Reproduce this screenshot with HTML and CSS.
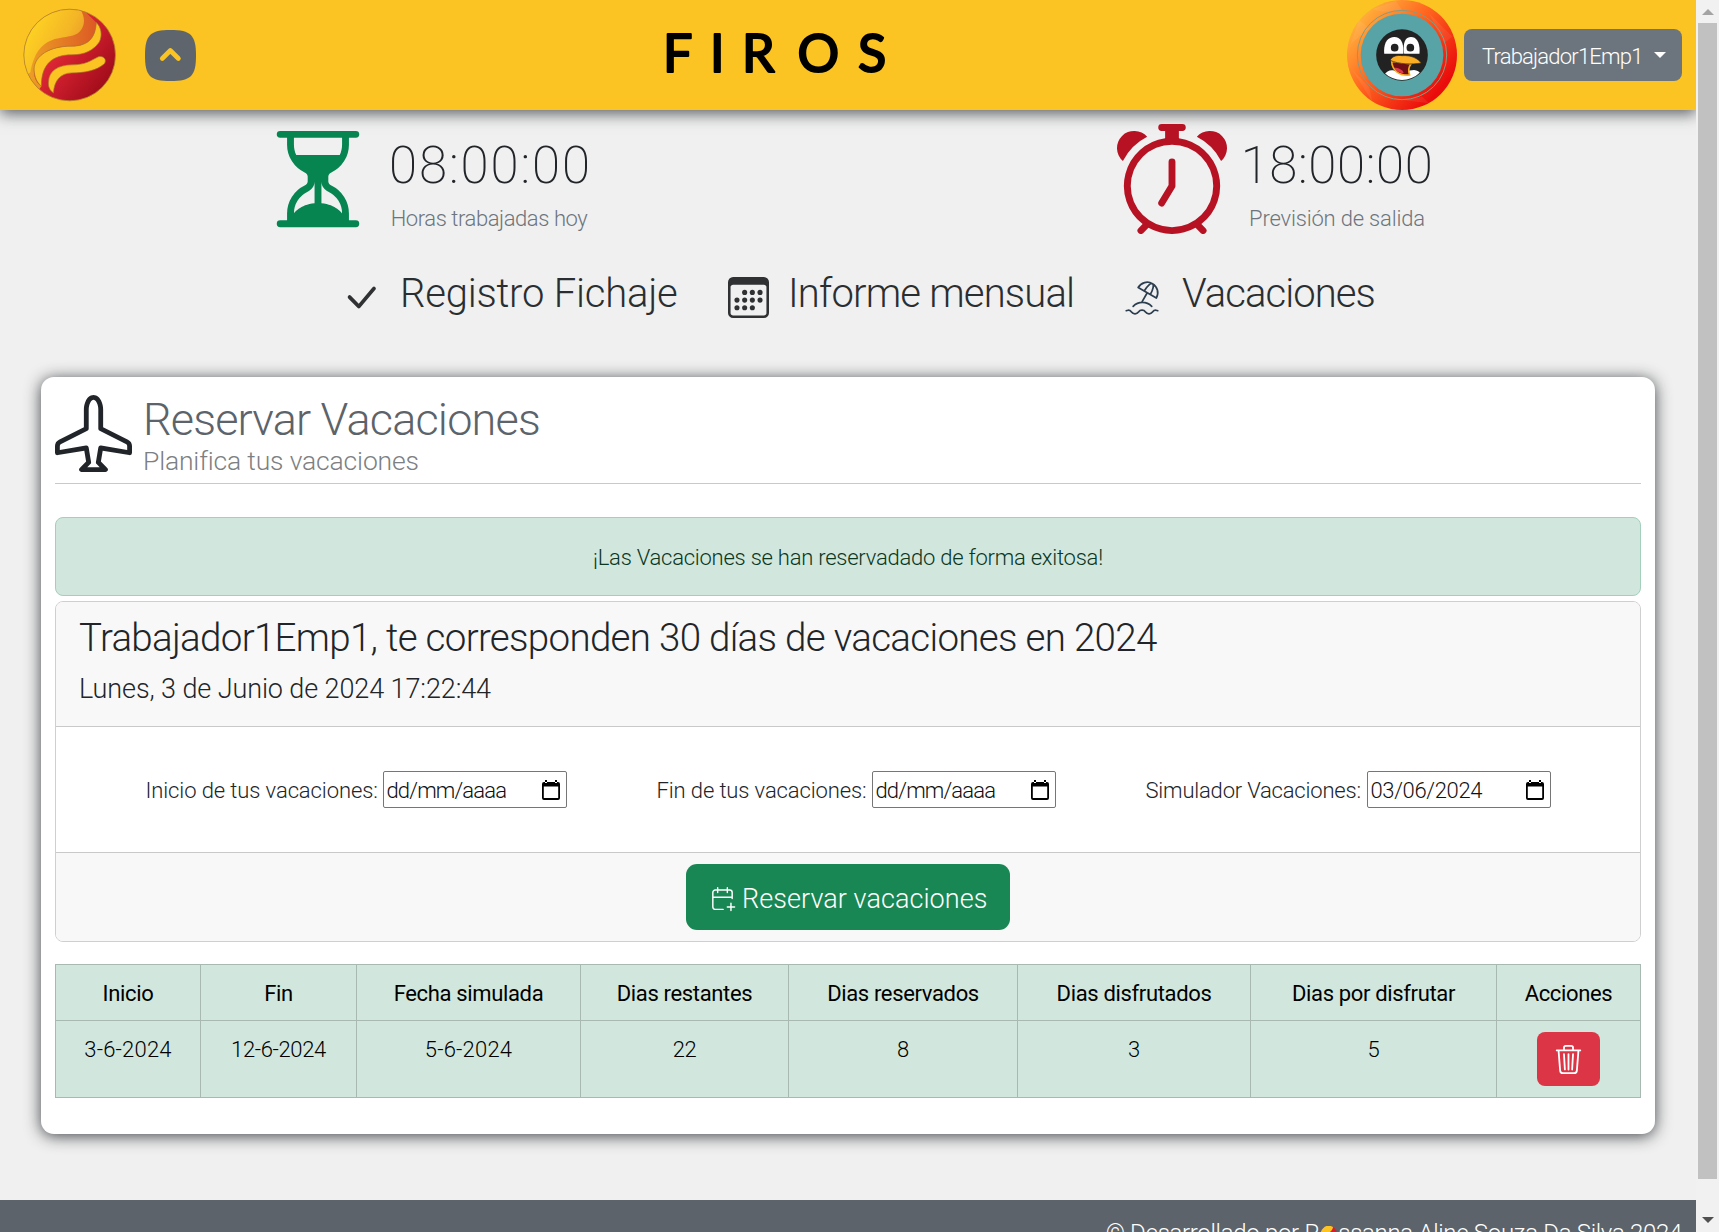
FILE: index.html
```html
<!DOCTYPE html>
<html lang="es">
<head>
<meta charset="utf-8">
<title>Firos - Vacaciones</title>
<link rel="stylesheet" href="styles.css">
</head>
<body>
<div class="page">
  <header class="topbar">
    <svg class="logo" viewBox="70 23 278 281">
      <defs>
        <linearGradient id="red" x1="0.1" y1="0.3" x2="0.9" y2="0.9"><stop offset="0" stop-color="#f03a40"/><stop offset=".45" stop-color="#d2202f"/><stop offset="1" stop-color="#9c0a18"/></linearGradient>
        <linearGradient id="org" x1="0" y1="0.4" x2="1" y2="0.4"><stop offset="0" stop-color="#efa724"/><stop offset="1" stop-color="#dc5a24"/></linearGradient>
        <linearGradient id="yel" x1="0.2" y1="0.2" x2="1" y2="0.7"><stop offset="0" stop-color="#fed322"/><stop offset=".6" stop-color="#f4b526"/><stop offset="1" stop-color="#e68f2a"/></linearGradient>
        <clipPath id="ball"><circle cx="209.500" cy="163.500" r="137"/></clipPath>
      </defs>
      <g clip-path="url(#ball)">
        <circle cx="209.500" cy="163.500" r="138" fill="url(#red)"/>
        <path d="M289 66C287 105 272 137 215 137C150 137 105 165 103 212C103 235 114 250 125 257L112 275L60 280V0H240L262 40Z" fill="url(#org)"/>
        <path d="M242 28C256 50 256 75 240 93C222 111 197 106 165 116C125 130 104 155 92 215L60 240V10Z" fill="url(#yel)"/>
        <path d="M289 66C287 105 272 137 215 137C150 137 105 165 103 205C103 230 114 248 125 257C124 190 160 163 215 163C255 163 280 150 298 125C308 105 304 80 289 66Z" fill="#fbc423" stroke="#a5762a" stroke-width="2"/>
        <path d="M161 277C149 268 145 258 146 245C147 210 175 194 215 193C258 193 272 180 295 169C311 164 322 178 313 190C290 210 255 217 215 217C182 218 163 240 161 277Z" fill="#fbc423" stroke="#a5762a" stroke-width="2"/>
      </g>
      <circle cx="209.500" cy="163.500" r="137" fill="none" stroke="#b5862b" stroke-width="2.500"/>
    </svg>
    <svg class="toggle" viewBox="435.500 90 152 152">
      <path d="M435.500 166C435.500 105 451 90 511.500 90S587.500 105 587.500 166 573 242 511.500 242 435.500 227 435.500 166Z" fill="#5e656c"/>
      <path d="M487 175L511 151L535 175" fill="none" stroke="#fbc423" stroke-width="14" stroke-linecap="round" stroke-linejoin="round"/>
    </svg>
    <svg class="brand" width="236" height="110"><text y="72" x="3 50 82 137.500 198">FIROS</text></svg>
    <svg class="avatar" viewBox="84 0 330 330">
      <defs>
        <linearGradient id="ring" x1="0.1" y1="0.15" x2="0.85" y2="0.8"><stop offset="0" stop-color="#ffb33c"/><stop offset=".45" stop-color="#ff651f"/><stop offset="1" stop-color="#ea0c0c"/></linearGradient>
        <clipPath id="face"><circle cx="249" cy="165" r="75"/></clipPath>
        <clipPath id="eyes"><rect x="180" y="100" width="140" height="61"/></clipPath>
      </defs>
      <circle cx="249" cy="165" r="165" fill="url(#ring)"/>
      <path d="M84 165L120 60L150 85L98 130ZM160 28L230 2L250 32L190 35ZM330 40L400 110L375 130ZM100 210L160 305L150 260ZM250 300L330 310L310 290Z" fill="#fff" opacity=".07"/>
      <circle cx="249" cy="165" r="134" fill="none" stroke="#8a9a80" stroke-width="3"/>
      <circle cx="249" cy="165" r="124" fill="#57a3a5"/>
      <circle cx="249" cy="165" r="77.500" fill="#222"/>
      <g clip-path="url(#eyes)" fill="#fff"><path d="M196 165C192 130 205 111 226 111S255 130 253 165Z"/><path d="M256 165C250 130 258 111 276 111S305 130 301 165Z"/></g>
      <circle cx="227" cy="143" r="11.500" fill="#222"/><circle cx="274" cy="143" r="11.500" fill="#222"/>
      <path clip-path="url(#face)" d="M195 225C205 210 220 206 235 216L285 210C295 211 302 215 305 222L290 250H205Z" fill="#fff"/>
      <path d="M218 184C219 210 240 228 272 225C267 212 268 202 276 192Z" fill="#6d0f14" stroke="#f5a91f" stroke-width="5" stroke-linejoin="round"/>
      <path d="M226 203C238 203 252 209 254 219C240 219 231 212 226 203Z" fill="#e23a4d"/>
      <path d="M213 181C220 168 235 165 249 167C275 165 297 175 307 189C280 194 240 193 213 181Z" fill="#fbae24" stroke="#222" stroke-width="2"/>
    </svg>
    <button class="user">Trabajador1Emp1<span class="caret"></span></button>
  </header>

  <section class="stats">
    <div class="stat">
      <svg class="stat-icon green" viewBox="0 0 16 16"><path d="M2.500 15a.5.5 0 1 1 0-1h1v-1a4.500 4.500 0 0 1 2.557-4.060c.29-.139.443-.377.443-.59v-.7c0-.213-.154-.451-.443-.59A4.500 4.500 0 0 1 3.500 3V2h-1a.5.5 0 0 1 0-1h11a.5.5 0 0 1 0 1h-1v1a4.500 4.500 0 0 1-2.557 4.060c-.29.139-.443.377-.443.59v.7c0 .213.154.451.443.59A4.500 4.500 0 0 1 12.500 13v1h1a.5.5 0 0 1 0 1zm2-13v1c0 .537.120 1.045.337 1.500h6.326c.216-.455.337-.963.337-1.500V2zm3 6.350c0 .701-.478 1.236-1.011 1.492A3.500 3.500 0 0 0 4.500 13s.866-1.299 3-1.480zm1 0v3.170c2.134.181 3 1.480 3 1.480a3.500 3.500 0 0 0-1.989-3.158C8.978 9.586 8.500 9.052 8.500 8.351z"/></svg>
      <div class="stat-text"><div class="clock clock-in">08:00:00</div><div class="stat-label label-in">Horas trabajadas hoy</div></div>
    </div>
    <div class="stat stat-out">
      <svg class="stat-icon red" viewBox="0 0 16 16"><path d="M6 .5a.5.5 0 0 1 .5-.5h3a.5.5 0 0 1 0 1H9v1.070a7.001 7.001 0 0 1 3.274 12.474l.601.602a.5.5 0 0 1-.707.708l-.746-.746A6.970 6.970 0 0 1 8 16a6.970 6.970 0 0 1-3.422-.892l-.746.746a.5.5 0 0 1-.707-.708l.602-.602A7.001 7.001 0 0 1 7 2.070V1h-.5A.5.5 0 0 1 6 .5zM8 3a6 6 0 1 0 .001 12A6 6 0 0 0 8 3zm.5 2.500a.5.5 0 0 0-1 0v3.362l-1.429 2.380a.5.5 0 1 0 .858.515l1.500-2.500A.5.5 0 0 0 8.500 9zM.860 5.387A2.500 2.500 0 1 1 4.387 1.860 8.035 8.035 0 0 0 .860 5.387M11.613 1.860a2.500 2.500 0 1 1 3.527 3.527 8.035 8.035 0 0 0-3.527-3.527"/></svg>
      <div class="stat-text"><div class="clock clock-out">18:00:00</div><div class="stat-label label-out">Previsión de salida</div></div>
    </div>
  </section>

  <nav class="menu">
    <a class="link"><svg width="41" height="41" viewBox="0 0 16 16" fill="#2f3133"><path d="M12.736 3.970a.733.733 0 0 1 1.047 0c.286.289.290.756.010 1.050L7.880 12.010a.733.733 0 0 1-1.065.020L3.217 8.384a.757.757 0 0 1 0-1.060.733.733 0 0 1 1.047 0l3.052 3.093 5.400-6.425z"/></svg><span class="t-reg">Registro Fichaje</span></a>
    <a class="link"><svg width="41" height="41" viewBox="0 0 16 16" fill="#2f3133"><path d="M14 0H2a2 2 0 0 0-2 2v12a2 2 0 0 0 2 2h12a2 2 0 0 0 2-2V2a2 2 0 0 0-2-2M1 3.857C1 3.384 1.448 3 2 3h12c.552 0 1 .384 1 .857v10.286c0 .473-.448.857-1 .857H2c-.552 0-1-.384-1-.857z"/><g><circle cx="6.500" cy="6" r="1"/><circle cx="9.500" cy="6" r="1"/><circle cx="12.500" cy="6" r="1"/><circle cx="3.500" cy="9" r="1"/><circle cx="6.500" cy="9" r="1"/><circle cx="9.500" cy="9" r="1"/><circle cx="12.500" cy="9" r="1"/><circle cx="3.500" cy="12" r="1"/><circle cx="6.500" cy="12" r="1"/><circle cx="9.500" cy="12" r="1"/></g></svg><span class="t-inf">Informe mensual</span></a>
    <a class="link"><svg width="42" height="42" viewBox="0 0 24 24" fill="none" stroke="#2c3e50" stroke-linecap="round" stroke-linejoin="round"><path d="M17.553 16.750a7.500 7.500 0 0 0-10.606 0M18 3.804A6 6 0 0 0 9.804 6l10.392 6A6 6 0 0 0 18 3.804zM16.732 10c1.658-2.870 2.225-5.644 1.268-6.196-.957-.552-3.075 1.326-4.732 4.196M15 9l-3 5.196M3 19.250A2.400 2.400 0 0 1 4 19a2.400 2.400 0 0 1 2 1 2.400 2.400 0 0 0 2 1 2.400 2.400 0 0 0 2-1 2.400 2.400 0 0 1 2-1 2.400 2.400 0 0 1 2 1 2.400 2.400 0 0 0 2 1 2.400 2.400 0 0 0 2-1 2.400 2.400 0 0 1 2-1 2.400 2.400 0 0 1 1 .250"/></svg><span class="t-vac">Vacaciones</span></a>
  </nav>

  <main class="panel">
    <div class="panel-head">
      <svg width="77" height="77" viewBox="0 0 16 16" fill="#212529"><path d="M6.428 1.151C6.708.591 7.213 0 8 0s1.292.592 1.572 1.151C9.861 1.730 10 2.431 10 3v3.691l5.170 2.585a1.500 1.500 0 0 1 .830 1.342V12a.5.5 0 0 1-.582.493l-5.507-.918-.375 2.253 1.318 1.318A.5.5 0 0 1 10.500 16h-5a.5.5 0 0 1-.354-.854l1.319-1.318-.376-2.253-5.507.918A.5.5 0 0 1 0 12v-1.382a1.500 1.500 0 0 1 .830-1.342L6 6.691V3c0-.568.140-1.271.428-1.849m.894.448C7.111 2.020 7 2.569 7 3v4a.5.5 0 0 1-.276.447l-5.448 2.724a.5.5 0 0 0-.276.447v.792l5.418-.903a.5.5 0 0 1 .575.410l.5 3a.5.5 0 0 1-.140.437L6.708 15h2.586l-.647-.646a.5.5 0 0 1-.140-.436l.5-3a.5.5 0 0 1 .576-.411L15 11.410v-.792a.5.5 0 0 0-.276-.447L9.276 7.447A.5.5 0 0 1 9 7V3c0-.432-.110-.979-.322-1.401C8.458 1.159 8.213 1 8 1s-.458.158-.678.599"/></svg>
      <div><h1>Reservar Vacaciones</h1><p class="subtitle">Planifica tus vacaciones</p></div>
    </div>
    <div class="alert">¡Las Vacaciones se han reservadado de forma exitosa!</div>
    <section class="card">
      <div class="card-head"><h2>Trabajador1Emp1, te corresponden 30 días de vacaciones en 2024</h2><p class="now">Lunes, 3 de Junio de 2024 17:22:44</p></div>
      <div class="card-body">
        <div class="field"><span class="f-ini">Inicio de tus vacaciones:</span><div class="date"><span class="ph">dd/mm/aaaa</span><svg width="18" height="20" viewBox="0 0 18 20"><path d="M2 2H16A2 2 0 0 1 18 4V18A2 2 0 0 1 16 20H2A2 2 0 0 1 0 18V4A2 2 0 0 1 2 2ZM1.800 6.500V18H16.200V6.500ZM3 0H5V3H3ZM13 0H15V3H13Z" fill-rule="evenodd"/></svg></div></div>
        <div class="field"><span class="f-fin">Fin de tus vacaciones:</span><div class="date"><span class="ph">dd/mm/aaaa</span><svg width="18" height="20" viewBox="0 0 18 20"><path d="M2 2H16A2 2 0 0 1 18 4V18A2 2 0 0 1 16 20H2A2 2 0 0 1 0 18V4A2 2 0 0 1 2 2ZM1.800 6.500V18H16.200V6.500ZM3 0H5V3H3ZM13 0H15V3H13Z" fill-rule="evenodd"/></svg></div></div>
        <div class="field"><span class="f-sim">Simulador Vacaciones:</span><div class="date"><span class="val">03/06/2024</span><svg width="18" height="20" viewBox="0 0 18 20"><path d="M2 2H16A2 2 0 0 1 18 4V18A2 2 0 0 1 16 20H2A2 2 0 0 1 0 18V4A2 2 0 0 1 2 2ZM1.800 6.500V18H16.200V6.500ZM3 0H5V3H3ZM13 0H15V3H13Z" fill-rule="evenodd"/></svg></div></div>
      </div>
      <div class="card-foot">
        <button class="reserve"><svg width="29" height="29" viewBox="0 0 24 24" fill="none" stroke="#fff" stroke-width="1.200" stroke-linecap="round" stroke-linejoin="round"><path d="M12.500 21H6a2 2 0 0 1-2-2V7a2 2 0 0 1 2-2h12a2 2 0 0 1 2 2v5M16 3v4M8 3v4M4 11h16M16 19h6M19 16v6"/></svg><span>Reservar vacaciones</span></button>
      </div>
    </section>
    <table class="table">
      <colgroup><col class="c1"><col class="c2"><col class="c3"><col class="c4"><col class="c5"><col class="c6"><col class="c7"><col class="c8"></colgroup>
      <thead><tr><th>Inicio</th><th>Fin</th><th>Fecha simulada</th><th>Dias restantes</th><th>Dias reservados</th><th>Dias disfrutados</th><th>Dias por disfrutar</th><th>Acciones</th></tr></thead>
      <tbody><tr><td class="wide">3-6-2024</td><td>12-6-2024</td><td class="wide">5-6-2024</td><td>22</td><td>8</td><td>3</td><td>5</td>
        <td class="act"><button class="delete"><svg width="29" height="29" viewBox="0 0 16 16" fill="#fff"><path d="M6.500 1h3a.5.5 0 0 1 .5.5v1H6v-1a.5.5 0 0 1 .5-.5M11 2.500v-1A1.500 1.500 0 0 0 9.500 0h-3A1.500 1.500 0 0 0 5 1.500v1H1.500a.5.5 0 0 0 0 1h.538l.853 10.660A2 2 0 0 0 4.885 16h6.230a2 2 0 0 0 1.994-1.840l.853-10.660h.538a.5.5 0 0 0 0-1zm1.958 1-.846 10.580a1 1 0 0 1-.997.920h-6.230a1 1 0 0 1-.997-.920L3.042 3.500zm-7.487 1a.5.5 0 0 1 .528.470l.5 8.500a.5.5 0 0 1-.998.060L5 5.030a.5.5 0 0 1 .470-.530zm5.058 0a.5.5 0 0 1 .470.530l-.5 8.500a.5.5 0 1 1-.998-.060l.5-8.500a.5.5 0 0 1 .528-.470M8 4.500a.5.5 0 0 1 .5.5v8.500a.5.5 0 0 1-1 0V5a.5.5 0 0 1 .5-.5"/></svg></button></td></tr></tbody>
    </table>
  </main>

  <footer class="footer">© Desarrollado por R<svg class="mini" viewBox="0 0 16 16"><circle cx="8" cy="8" r="8" fill="#d2202f"/><path d="M12 1A8 8 0 0 0 1 12C4 6 11 8 12 1Z" fill="#fcc423"/></svg>ssanna Aline Souza Da Silva 2024</footer>
</div>
<div class="scrollbar"><i class="up"></i><div class="thumb"></div><i class="down"></i></div>
</body>
</html>
```
FILE: styles.css
```css
* { box-sizing: border-box; }
body {
  margin: 0; display: flex; height: 1232px; overflow: hidden; background: #f0f0f0;
  font-family: Roboto, "Open Sans", sans-serif; font-weight: 300; font-size: 22px; color: #212529;
}
h1, h2, p { margin: 0; font-weight: 300; }
button { font: inherit; border: 0; padding: 0; color: #fff; }
svg { display: block; flex: none; }
.page { width: 1696px; height: 1232px; overflow: hidden; white-space: nowrap; }

.topbar { height: 110px; display: flex; align-items: center; padding: 0 14px 0 23px; background: #fbc423; box-shadow: 0 4px 14px rgba(33, 37, 41, .7); }
.logo { width: 93px; height: 94px; }
.toggle { width: 51px; height: 51px; margin-left: 29px; }
.brand { margin-left: 464px; overflow: visible; }
.brand text { font: 400 52px Lato, sans-serif; fill: #000; stroke: #000; stroke-width: 2.2px; stroke-linejoin: round; }
.avatar { width: 110px; height: 110px; margin-left: auto; }
.user { display: flex; align-items: center; gap: 11px; width: 218px; height: 52px; margin-left: 7px; padding: 2px 0 0 18px; border-radius: 8px; background: #6c757d; letter-spacing: -.8px; }
.caret { width: 0; margin-top: -3px; border: 6px solid transparent; border-top-color: #fff; border-bottom: 0; }

.stats { display: flex; padding: 14px 0 0 263px; height: 159px; }
.stat { display: flex; gap: 16px; }
.stat-out { margin-left: 528px; gap: 10px; }
.stat-icon { width: 110px; height: 110px; }
.green { fill: #068551; }
.red { fill: #b61223; }
.stat-text { width: 200px; padding-top: 12px; text-align: center; }
.clock { font-size: 51px; line-height: 60px; font-weight: 200; }
.clock-in { letter-spacing: 1.9px; }
.clock-out { letter-spacing: .6px; }
.stat-label { margin-top: 8px; line-height: 30px; color: #6c757d; }
.label-in { letter-spacing: -.42px; }
.label-out { letter-spacing: -.18px; }

.menu { display: grid; grid-template-columns: 388px 393px auto; height: 108px; padding-left: 340px; color: #2b2e31; }
.link { display: flex; gap: 19px; height: 57px; align-items: center; font-size: 40px; line-height: 48px; }
.link span { align-self: flex-start; padding-top: 1px; }
.t-reg { letter-spacing: -.22px; }
.t-inf { letter-spacing: -.82px; }
.t-vac { letter-spacing: -.95px; }

.panel { width: 1614px; height: 757px; margin: 0 0 66px 41px; padding: 18px 14px 0; border-radius: 13px; background: #fff; box-shadow: 0 2px 16px rgba(33, 37, 41, .85); }
.panel-head { display: flex; gap: 11px; height: 89px; border-bottom: 1px solid #c8c9ca; }
h1 { font-size: 45px; line-height: 50px; letter-spacing: -.83px; color: #5c636a; }
.subtitle { font-size: 26.500px; line-height: 32px; letter-spacing: -.17px; color: #7d8082; }
.alert { display: flex; align-items: center; justify-content: center; height: 79px; margin-top: 33px; padding-top: 2px; border: 1px solid #a3cfbb; border-radius: 8px; background: #d1e7dd; color: #0a3622; letter-spacing: -.24px; }
.card { height: 341px; margin-top: 5px; border: 1px solid #cfcfcf; border-radius: 8px; overflow: hidden; }
.card-head { height: 125px; padding: 12px 0 0 23px; border-bottom: 1px solid #c9c9c9; background: #f8f8f8; }
h2 { font-size: 38.500px; line-height: 48px; letter-spacing: -.69px; }
.now { margin-top: 11px; font-size: 27px; line-height: 32px; letter-spacing: -.1px; }
.card-body { display: flex; justify-content: center; align-items: center; gap: 90px; height: 125px; }
.field { display: flex; align-items: center; gap: 4px; }
.field > span { padding-top: 2px; }
.f-ini { width: 233px; letter-spacing: -.1px; }
.f-fin { width: 211px; letter-spacing: -.12px; }
.f-sim { width: 217px; letter-spacing: -.2px; }
.date { display: flex; align-items: center; justify-content: space-between; width: 184px; height: 37px; padding: 1px 6px 0 3px; border: 1px solid #767676; border-radius: 2px; background: #fff; color: #111; }
.date svg { margin-top: -1px; }
.ph { letter-spacing: -.85px; }
.val { letter-spacing: -.35px; }
.card-foot { display: flex; align-items: center; justify-content: center; height: 89px; border-top: 1px solid #c9c9c9; background: #f8f8f8; }
.reserve { display: flex; align-items: center; gap: 5px; width: 324px; height: 66px; padding-left: 22px; border-radius: 11px; background: #198754; font-size: 27px; letter-spacing: .06px; }
.reserve span, .reserve svg { margin-top: 3px; }

.table { width: 1586px; margin-top: 22px; table-layout: fixed; border-collapse: collapse; background: #d1e7dd; color: #000; text-align: center; }
.c1 { width: 145px; } .c2 { width: 156px; } .c3 { width: 224px; } .c4 { width: 208px; }
.c5 { width: 229px; } .c6 { width: 233px; } .c7 { width: 246px; } .c8 { width: 144px; }
th, td { padding: 0; border: 1px solid #a7b9b1; }
th { height: 56px; padding-top: 1px; font-weight: 400; letter-spacing: -.35px; }
td { height: 77px; padding-top: 12px; vertical-align: top; line-height: 33px; letter-spacing: -.35px; }
.wide { letter-spacing: .2px; }
.act { padding-top: 11px; }
.delete { display: flex; align-items: center; justify-content: center; width: 63px; height: 54px; margin: 0 auto; border-radius: 8px; background: #dc3545; }

.footer { height: 80px; padding: 15px 14px 0 0; background: #5c636a; color: #fff; text-align: right; font-size: 24px; line-height: 36px; letter-spacing: -.31px; }
.mini { display: inline-block; width: 16px; height: 16px; margin: 0 1px 0 2px; vertical-align: -1px; }

.scrollbar { display: flex; flex-direction: column; align-items: center; width: 23px; height: 1232px; padding: 9px 0; background: #f1f1f1; }
.up, .down { border: 6px solid transparent; }
.up { border-top: 0; border-bottom-color: #a3a3a3; }
.down { margin-top: auto; border-bottom: 0; border-top-color: #505050; }
.thumb { width: 19px; height: 1156px; margin-top: 8px; background: #c1c1c1; }
```
